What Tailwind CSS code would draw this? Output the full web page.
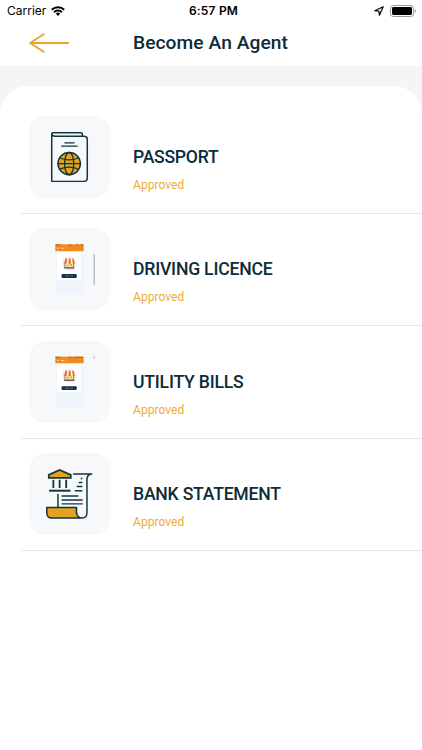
<!DOCTYPE html>
<html lang="en">
<head>
    <meta charset="UTF-8">
    <meta name="viewport" content="width=device-width, initial-scale=1.0">
    <title>Become An Agent</title>
    <script src="https://cdn.jsdelivr.net/npm/@tailwindcss/browser@4"></script>
</head>
<body class="bg-white font-[Roboto,sans-serif] text-[#0b2c38] h-screen overflow-hidden">

    <!-- Status bar -->
    <div class="h-[22px] grid grid-cols-3 items-center pl-[7px] pr-[5px] font-[Inter,sans-serif] text-black">
        <div class="flex items-center gap-[5px]">
            <span class="text-[12px] leading-none">Carrier</span>
            <svg class="w-[14px] h-[10px]" viewBox="0 0 14 10" fill="none" stroke="#000" stroke-width="2">
                <path d="M0.8 3.7a8.8 8.8 0 0 1 12.4 0M3.1 6.2a5.5 5.5 0 0 1 7.8 0" />
                <path d="M7 10 4.8 7.7a3.1 3.1 0 0 1 4.4 0z" fill="#000" stroke="none" />
            </svg>
        </div>
        <div class="text-center pl-[3px] text-[12px] leading-none font-semibold tracking-[0.2px] whitespace-nowrap">6:57 PM</div>
        <div class="flex items-center justify-end gap-[6px]">
            <svg class="w-[10px] h-[10px]" viewBox="0 0 10 10" fill="none" stroke="#000" stroke-width="1.2" stroke-linejoin="round">
                <path d="M9.2 0.8 0.8 4.7l4.1 0.4 0.5 4.1z" />
            </svg>
            <svg class="w-[27px] h-[12px]" viewBox="0 0 27 12">
                <rect x="0.5" y="0.5" width="23" height="11" rx="2.8" fill="none" stroke="#999" />
                <rect x="2" y="2" width="20" height="8" rx="1.4" fill="#000" />
                <path d="M24.8 4v4c1.5-.6 1.5-3.4 0-4z" fill="#999" />
            </svg>
        </div>
    </div>

    <!-- Header -->
    <div class="h-11 grid grid-cols-[133px_1fr] items-center">
        <svg class="ml-[29px] w-[40px] h-[20px] -mt-[2px]" viewBox="0 0 40 20" fill="none" stroke="#e8a628" stroke-width="1.9" stroke-linecap="round" stroke-linejoin="round">
            <path d="M39 10H1.2M14.6 1.2 1.2 10l13.4 8.8" />
        </svg>
        <h1 class="text-[19.2px] leading-5 font-medium tracking-[0.07px] -mt-[2px]">Become An Agent</h1>
    </div>

    <!-- Documents -->
    <div class="bg-[#f4f6f6] pt-5">
        <div class="bg-white rounded-t-[28px] h-[664px] pt-[15.4px] pl-[21px]">

            <div class="h-[112.4px] flex items-center border-b border-[#e6e7e8] pl-[8px]">
                <div class="w-[81px] h-[82px] rounded-[16px] bg-[#f6f8fa]">
                    <svg class="w-full h-full" viewBox="26 18 246 246" fill="none" stroke="#12343f" stroke-width="4.5" stroke-linecap="round" stroke-linejoin="round">
                        <path d="M188 75v-3q0-5-6-5H99q-4 0-4 5v143h98q10 0 10-10V87q0-9-10-9h-88q-9 0-10-7" />
                        <path d="M135 98h28M125 108h47" stroke-width="4" />
                        <circle cx="148" cy="161" r="34" fill="#e3a31f" />
                        <ellipse cx="148" cy="161" rx="14" ry="34" stroke-width="4" />
                        <path d="M114 161h68M120 144q28 12 56 0M120 178q28-12 56 0" stroke-width="4" />
                    </svg>
                </div>
                <div class="ml-[23px] pt-[25.6px]">
                    <div class="text-[17.6px] leading-5 font-medium tracking-[-0.26px]">PASSPORT</div>
                    <div class="mt-[10px] text-[12px] leading-4 tracking-[0.05px] text-[#ebac36]">Approved</div>
                </div>
            </div>

            <div class="h-[112.4px] flex items-center border-b border-[#e6e7e8] pl-[8px]">
                <div class="w-[81px] h-[82px] rounded-[16px] bg-[#f6f8fa]">
                    <svg class="w-full h-full" viewBox="26 18 246 246">
                        <rect x="107" y="66" width="85" height="152" fill="#f0f5fc" />
                        <rect x="111" y="88" width="72" height="85" fill="#fff" />
                        <rect x="106" y="66" width="86" height="21" fill="#f18a20" />
                        <path d="M107 68h14M146 68h9M170 68h5M182 68h8" stroke="#a65d1b" stroke-width="3" />
                        <path d="M112 78h5M124 78h10" stroke="#ffd9ae" stroke-width="3" />
                        <circle cx="148" cy="124" r="22" fill="#eeeeef" />
                        <rect x="135" y="118" width="27" height="19" fill="#f6dda0" stroke="#76513f" stroke-width="2" />
                        <path d="M137 109h23l4 15h-31z" fill="#fff0d3" />
                        <path d="M137 109h5l-2 16h-7zM147 109h5l1 16h-7zM157 109h4l4 16h-6z" fill="#ed652b" />
                        <path d="M142 130h4M151 128h5" stroke="#c99524" stroke-width="4" />
                        <path d="M133 138h31" stroke="#64483f" stroke-width="3" />
                        <rect x="125" y="156" width="46" height="12" rx="3" fill="#172e50" />
                        <path d="M137 162h8M148 162h2M153 162h6" stroke="#a5b2c5" stroke-width="2" />
                        <path d="M224 96v93" stroke="#8b9097" stroke-width="2.5" />
                    </svg>
                </div>
                <div class="ml-[23px] pt-[25.6px]">
                    <div class="text-[17.6px] leading-5 font-medium tracking-[-0.2px]">DRIVING LICENCE</div>
                    <div class="mt-[10px] text-[12px] leading-4 tracking-[0.05px] text-[#ebac36]">Approved</div>
                </div>
            </div>

            <div class="h-[112.4px] flex items-center border-b border-[#e6e7e8] pl-[8px]">
                <div class="w-[81px] h-[82px] rounded-[16px] bg-[#f6f8fa]">
                    <svg class="w-full h-full" viewBox="26 18 246 246">
                        <rect x="107" y="64" width="85" height="152" fill="#f0f5fc" />
                        <rect x="111" y="86" width="72" height="86" fill="#fff" />
                        <rect x="106" y="64" width="86" height="20" fill="#f18a20" />
                        <path d="M107 66h14M146 66h9M160 66h30" stroke="#a65d1b" stroke-width="3" />
                        <path d="M112 76h5M124 76h10" stroke="#ffd9ae" stroke-width="3" />
                        <circle cx="148" cy="122" r="22" fill="#eeeeef" />
                        <rect x="135" y="116" width="27" height="19" fill="#f6dda0" stroke="#76513f" stroke-width="2" />
                        <path d="M137 107h23l4 15h-31z" fill="#fff0d3" />
                        <path d="M137 107h5l-2 16h-7zM147 107h5l1 16h-7zM157 107h4l4 16h-6z" fill="#ed652b" />
                        <path d="M142 128h4M151 126h5" stroke="#c99524" stroke-width="4" />
                        <path d="M133 136h31" stroke="#64483f" stroke-width="3" />
                        <rect x="125" y="154" width="46" height="11" rx="3" fill="#172e50" />
                        <path d="M137 160h8M148 160h2M153 160h6" stroke="#a5b2c5" stroke-width="2" />
                        <path d="M224 64v5" stroke="#8b9097" stroke-width="3" />
                    </svg>
                </div>
                <div class="ml-[23px] pt-[25.6px]">
                    <div class="text-[17.6px] leading-5 font-medium tracking-[-0.2px]">UTILITY BILLS</div>
                    <div class="mt-[10px] text-[12px] leading-4 tracking-[0.05px] text-[#ebac36]">Approved</div>
                </div>
            </div>

            <div class="h-[112.4px] flex items-center border-b border-[#e6e7e8] pl-[8px]">
                <div class="w-[81px] h-[82px] rounded-[16px] bg-[#f6f8fa]">
                    <svg class="w-full h-full" viewBox="26 18 246 246" fill="none" stroke="#12343f" stroke-width="4.5">
                        <path d="M86 92v-9l33-15 34 15v9z" fill="#e3a31f" stroke-width="5" />
                        <path d="M100 98v25M119 98v25M139 98v25" stroke-width="5.5" />
                        <path d="M87 131h65" stroke-width="6" />
                        <path d="M160 80h58M218 80q-16 0-16 17v102q0 15-15 15-17 0-17-17v-14" />
                        <path d="M80 182h90v14q0 13 12 18H96q-16 0-16-16z" fill="#e3a31f" />
                        <path d="M114 141v41" />
                        <path d="M183 94h5M177 106h11M171 118h17M165 131h23M125 147h51M125 159h64M125 171h64" />
                    </svg>
                </div>
                <div class="ml-[23px] pt-[25.6px]">
                    <div class="text-[17.6px] leading-5 font-medium tracking-[-0.22px]">BANK STATEMENT</div>
                    <div class="mt-[10px] text-[12px] leading-4 tracking-[0.05px] text-[#ebac36]">Approved</div>
                </div>
            </div>

        </div>
    </div>

</body>
</html>
